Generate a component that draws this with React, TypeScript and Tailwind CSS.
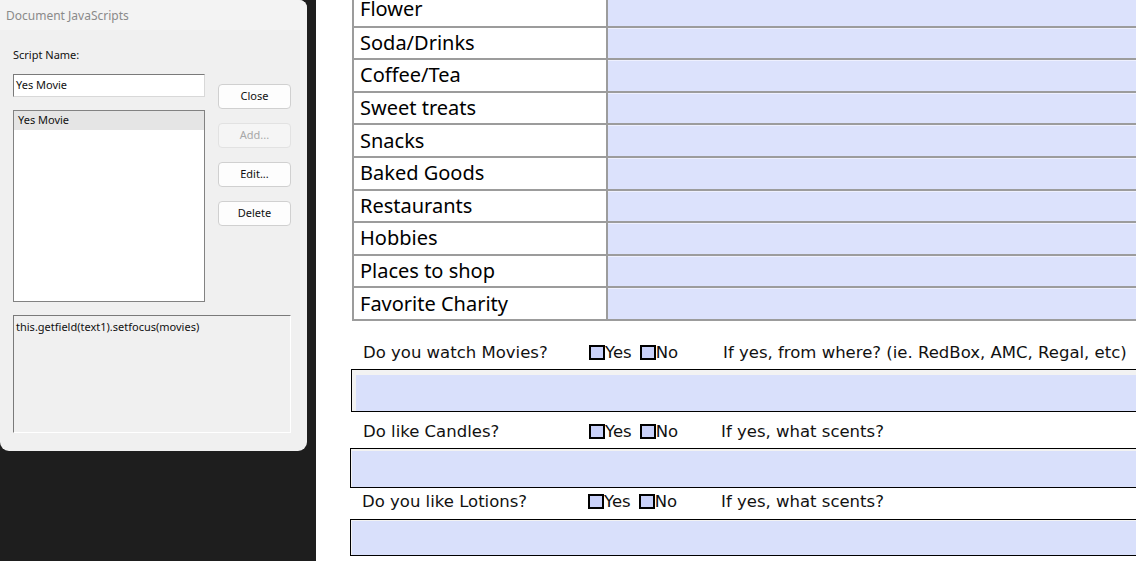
import React from "react";

const rows = [
  "Flower",
  "Soda/Drinks",
  "Coffee/Tea",
  "Sweet treats",
  "Snacks",
  "Baked Goods",
  "Restaurants",
  "Hobbies",
  "Places to shop",
  "Favorite Charity",
];

function DlgButton({ label, disabled }: { label: string; disabled?: boolean }) {
  return (
    <div
      className={
        "h-[25px] w-[73px] rounded-[4px] border flex items-center justify-center text-[11px] " +
        (disabled
          ? "border-[#e2e2e2] bg-[#f5f5f5] text-[#a8a8a8]"
          : "border-[#d0d0d0] bg-[#fdfdfd] text-[#111]")
      }
    >
      {label}
    </div>
  );
}

function Check({ label }: { label: string }) {
  return (
    <div className="flex items-center">
      <div className="w-[16px] h-[15px] border-2 border-black bg-[#c9d1f9]" />
      <span>{label}</span>
    </div>
  );
}

function Question({
  q,
  where,
  ml,
  wml,
  h,
}: {
  q: string;
  where: string;
  ml: string;
  wml: string;
  h: string;
}) {
  return (
    <div className={"flex items-center " + h + " " + ml}>
      <span className="w-[226px] shrink-0">{q}</span>
      <Check label="Yes" />
      <div className="w-[8px]" />
      <Check label="No" />
      <span className={wml}>{where}</span>
    </div>
  );
}

export default function App() {
  return (
    <div className="w-[1136px] h-[561px] overflow-hidden flex bg-[#1e1e1e]">
      {/* Left: dialog over dark viewer background */}
      <div className="w-[316px] shrink-0">
        <div
          className="w-[307px] h-[451px] bg-[#f0f0f0] rounded-b-[9px] rounded-tr-[8px] text-[#111]"
          style={{ fontFamily: '"Noto Sans", "Open Sans", sans-serif' }}
        >
          <div className="h-[30px] bg-[#f3f3f3] rounded-tr-[8px] flex items-center pl-[6px] pt-[1px] text-[12px] text-[#8a8a8a]">
            Document JavaScripts
          </div>
          <div className="px-[13px] flex">
            <div className="w-[192px] shrink-0">
              <div className="mt-[17px] h-[16px] text-[11px] leading-[16px]">Script Name:</div>
              <div className="mt-[11px] h-[23px] bg-white border border-t-[#7a7a7a] border-l-[#7a7a7a] border-r-[#d8d8d8] border-b-[#d8d8d8] flex items-center pl-[2px] text-[11px]">
                Yes Movie
              </div>
              <div className="mt-[13px] h-[192px] bg-white border border-[#828282]">
                <div className="h-[19px] bg-[#e5e5e5] flex items-center pl-[4px] text-[11px]">
                  Yes Movie
                </div>
              </div>
            </div>
            <div className="ml-[13px] pt-[54px] flex flex-col gap-[14px]">
              <DlgButton label="Close" />
              <DlgButton label="Add..." disabled />
              <DlgButton label="Edit..." />
              <DlgButton label="Delete" />
            </div>
          </div>
          <div className="ml-[13px] mr-[16px] mt-[13px] h-[118px] bg-[#f0f0f0] border border-t-[#7a7a7a] border-l-[#7a7a7a] border-r-[#ffffff] border-b-[#ffffff] pl-[2px] pt-[3px] text-[11px] leading-[15px]">
            this.getfield(text1).setfocus(movies)
          </div>
        </div>
      </div>

      {/* Right: PDF page */}
      <div className="flex-1 bg-white overflow-hidden">
        <div className="-mt-[7px] ml-[36px] w-[820px]">
          <div
            className="border-l-2 border-b-2 border-[#9c9c9c] text-black text-[20px]"
            style={{ fontFamily: '"Noto Sans", "Open Sans", sans-serif' }}
          >
            {rows.map((r, i) => (
              <div
                key={r}
                className={"flex h-[32.6px] " + (i > 0 ? "border-t-2 border-[#9c9c9c]" : "")}
              >
                <div className="w-[254px] shrink-0 border-r-2 border-[#9c9c9c] pl-[6px] flex items-center leading-none">
                  {r}
                </div>
                <div className="flex-1 bg-[#dce2fc] border-t border-[#eef0fe]" />
              </div>
            ))}
          </div>

          <div
            className="text-[16.5px] text-[#111]"
            style={{ fontFamily: '"DejaVu Sans", Verdana, sans-serif' }}
          >
            <div className="mt-[17px]">
              <Question
                q="Do you watch Movies?"
                where="If yes, from where? (ie. RedBox, AMC, Regal, etc)"
                ml="ml-[11px]"
                wml="ml-[45px]"
                h="h-[30px]"
              />
            </div>
            <div className="ml-[-1px] mt-[1px] h-[43px] border border-black bg-[#f2f2f2] pt-[5px] pl-[4px]">
              <div className="h-full bg-[#d9e0fb]" />
            </div>
            <div className="mt-[5px]">
              <Question
                q="Do like Candles?"
                where="If yes, what scents?"
                ml="ml-[11px]"
                wml="ml-[43px]"
                h="h-[30px]"
              />
            </div>
            <div className="ml-[-2px] mt-[1px] h-[40px] border border-black bg-[#f2f2f2] pt-[2px] pl-[1px]">
              <div className="h-full bg-[#d9e0fb]" />
            </div>
            <div className="mt-[0px]">
              <Question
                q="Do you like Lotions?"
                where="If yes, what scents?"
                ml="ml-[10px]"
                wml="ml-[44px]"
                h="h-[28px]"
              />
            </div>
            <div className="ml-[-2px] mt-[3px] h-[37px] border border-black bg-[#f2f2f2] pt-[1px] pl-[1px]">
              <div className="h-full bg-[#d9e0fb]" />
            </div>
          </div>
        </div>
      </div>
    </div>
  );
}
